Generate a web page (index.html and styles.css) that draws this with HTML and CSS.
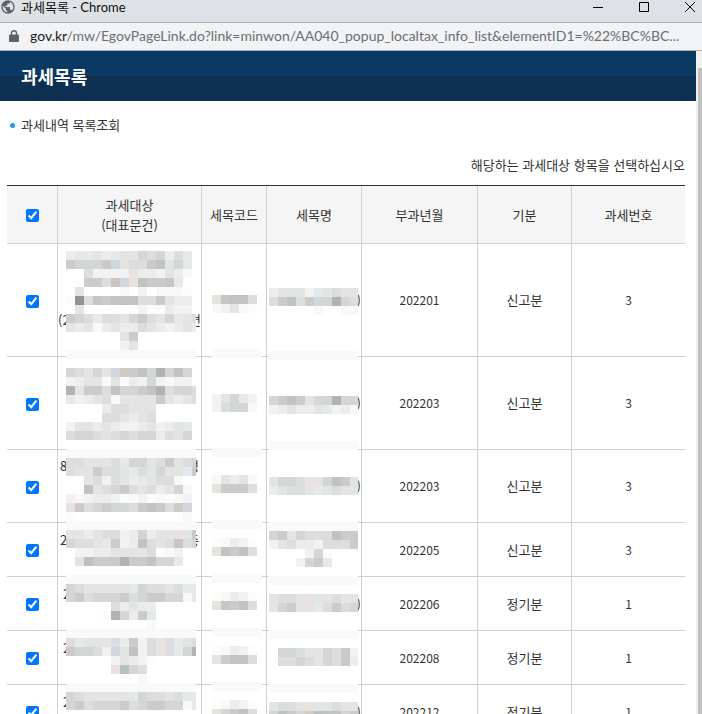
FILE: index.html
```html
<!DOCTYPE html>
<html lang="ko">
<head>
    <meta charset="UTF-8">
    <meta name="viewport" content="width=device-width, initial-scale=1.0">
    <title>과세목록</title>
    <link rel="stylesheet" href="styles.css">
</head>
<body>

    <div class="titlebar">
        <svg class="globe" width="16" height="16" viewBox="0 0 24 24">
            <path fill="#5f6368" d="M12 2C6.48 2 2 6.48 2 12s4.48 10 10 10 10-4.48 10-10S17.52 2 12 2zm-1 17.93c-3.95-.49-7-3.85-7-7.93 0-.62.08-1.21.21-1.79L9 15v1c0 1.1.9 2 2 2v1.93zm6.900-2.540c-.26-.81-1-1.390-1.900-1.390h-1v-3c0-.55-.45-1-1-1H8v-2h2c.55 0 1-.45 1-1V7h2c1.100 0 2-.9 2-2v-.410c2.930 1.190 5 4.060 5 7.410 0 2.080-.8 3.970-2.100 5.390z"/>
        </svg>
        <span class="window-title">과세목록 - Chrome</span>
        <div class="window-buttons">
            <button type="button" aria-label="최소화"><svg width="12" height="12" viewBox="0 0 12 12"><path d="M1 6.500h10"/></svg></button>
            <button type="button" aria-label="최대화"><svg width="12" height="12" viewBox="0 0 12 12"><path d="M1.500 1.500h9v9h-9z"/></svg></button>
            <button type="button" aria-label="닫기"><svg width="12" height="12" viewBox="0 0 12 12"><path d="M1 1l10 10M11 1L1 11"/></svg></button>
        </div>
    </div>

    <div class="addressbar">
        <svg width="10" height="12" viewBox="0 0 10 12">
            <path fill="#5f6368" d="M1 4.500h8a1 1 0 0 1 1 1V11a1 1 0 0 1-1 1H1a1 1 0 0 1-1-1V5.500a1 1 0 0 1 1-1z"/>
            <path fill="none" stroke="#5f6368" stroke-width="1.400" d="M2.500 5V3a2.500 2.300 0 0 1 5 0v2"/>
        </svg>
        <div class="url"><span>gov.kr</span>/mw/EgovPageLink.do?link=minwon/AA040_popup_localtax_info_list&amp;elementID1=%22%BC%BC...</div>
    </div>

    <div class="viewport">
        <main class="page">
            <header class="popup-header">
                <h1>과세목록</h1>
            </header>

            <div class="content">
                <h2>과세내역 목록조회</h2>
                <p class="guide">해당하는 과세대상 항목을 선택하십시오</p>

                <div class="table-wrap">
                    <table>
                        <colgroup>
                            <col class="col-check">
                            <col class="col-target">
                            <col class="col-code">
                            <col class="col-name">
                            <col class="col-month">
                            <col class="col-term">
                            <col>
                        </colgroup>
                        <thead>
                            <tr>
                                <th><input type="checkbox" aria-label="전체 선택" checked></th>
                                <th>과세대상<br>(대표문건)</th>
                                <th>세목코드</th>
                                <th>세목명</th>
                                <th>부과년월</th>
                                <th>기분</th>
                                <th>과세번호</th>
                            </tr>
                        </thead>
                        <tbody>
                            <tr>
                                <td><input type="checkbox" aria-label="202201 신고분 선택" checked></td>
                                <td class="target">
                                    <div class="line"></div>
                                    <div class="line"></div>
                                    <div class="line"></div>
                                    <div class="line wide"><span>(2</span><span>면</span></div>
                                    <div class="line"></div>
                                </td>
                                <td></td>
                                <td class="name">)</td>
                                <td class="num">202201</td>
                                <td>신고분</td>
                                <td class="num">3</td>
                            </tr>
                            <tr>
                                <td><input type="checkbox" aria-label="202203 신고분 선택" checked></td>
                                <td class="target">
                                    <div class="line"></div>
                                    <div class="line"></div>
                                    <div class="line"></div>
                                    <div class="line"></div>
                                </td>
                                <td></td>
                                <td class="name">)</td>
                                <td class="num">202203</td>
                                <td>신고분</td>
                                <td class="num">3</td>
                            </tr>
                            <tr>
                                <td><input type="checkbox" aria-label="202203 신고분 선택" checked></td>
                                <td class="target">
                                    <div class="line"><span>8</span><span>성</span></div>
                                    <div class="line"></div>
                                    <div class="line"></div>
                                </td>
                                <td></td>
                                <td class="name">)</td>
                                <td class="num">202203</td>
                                <td>신고분</td>
                                <td class="num">3</td>
                            </tr>
                            <tr>
                                <td><input type="checkbox" aria-label="202205 신고분 선택" checked></td>
                                <td class="target">
                                    <div class="line"><span>2</span><span>층</span></div>
                                    <div class="line"></div>
                                </td>
                                <td></td>
                                <td></td>
                                <td class="num">202205</td>
                                <td>신고분</td>
                                <td class="num">3</td>
                            </tr>
                            <tr>
                                <td><input type="checkbox" aria-label="202206 정기분 선택" checked></td>
                                <td class="target">
                                    <div class="line narrow"><span>2</span></div>
                                    <div class="line"></div>
                                </td>
                                <td></td>
                                <td class="name">)</td>
                                <td class="num">202206</td>
                                <td>정기분</td>
                                <td class="num">1</td>
                            </tr>
                            <tr>
                                <td><input type="checkbox" aria-label="202208 정기분 선택" checked></td>
                                <td class="target">
                                    <div class="line narrow"><span>2</span></div>
                                    <div class="line"></div>
                                </td>
                                <td></td>
                                <td></td>
                                <td class="num">202208</td>
                                <td>정기분</td>
                                <td class="num">1</td>
                            </tr>
                            <tr>
                                <td><input type="checkbox" aria-label="202212 정기분 선택" checked></td>
                                <td class="target">
                                    <div class="line narrow"><span>2</span></div>
                                    <div class="line"></div>
                                </td>
                                <td></td>
                                <td class="name">)</td>
                                <td class="num">202212</td>
                                <td>정기분</td>
                                <td class="num">1</td>
                            </tr>
                        </tbody>
                    </table>

                    <!-- mosaics over the private columns, filled in by mosaic.js -->
                    <svg class="mosaic mosaic-target" id="mosaic-target" width="130" height="480"></svg>
                    <svg class="mosaic mosaic-code" id="mosaic-code" width="50" height="440"></svg>
                    <svg class="mosaic mosaic-name" id="mosaic-name" width="89" height="440"></svg>
                </div>
            </div>
        </main>

        <div class="scrollbar">
            <div class="scroll-thumb"></div>
        </div>
    </div>

    <script src="mosaic.js"></script>
</body>
</html>
```
FILE: styles.css
```css
:root {
    --chrome-bg: #dee1e6;
    --address-bg: #f1f3f4;
    --chrome-line: #b0b1b3;
    --header-top: #0a3a63;
    --header-bottom: #0e3052;
    --text-color: #333333;
    --cell-line: #d0d0d0;
    --head-bg: #f5f5f5;
}

* {
    margin: 0;
    padding: 0;
    box-sizing: border-box;
}

body {
    height: 100vh;
    display: flex;
    flex-direction: column;
    overflow: hidden;
    background: #ffffff;
    color: var(--text-color);
    font-family: "Noto Sans CJK KR", sans-serif;
    font-size: 13px;
    line-height: 20px;
}

/* browser window */
.titlebar {
    flex: none;
    display: flex;
    align-items: center;
    height: 23px;
    padding-bottom: 8px;
    background: var(--chrome-bg);
    border-bottom: 1px solid var(--chrome-line);
}

.globe {
    flex: none;
    margin-right: 5px;
}

.window-title {
    color: #111111;
    font-family: Lato, "Noto Sans CJK KR", sans-serif;
    font-size: 13px;
    line-height: 14px;
}

.window-buttons {
    display: flex;
    gap: 34px;
    margin-left: auto;
    padding-right: 6px;
}

.window-buttons button {
    width: 12px;
    height: 12px;
    border: none;
    background: none;
}

.window-buttons svg {
    display: block;
    fill: none;
    stroke: #000000;
}

.addressbar {
    flex: none;
    display: flex;
    align-items: center;
    gap: 11px;
    height: 28px;
    padding: 0 10px 1px 9px;
    background: var(--address-bg);
    border-bottom: 1px solid var(--chrome-line);
}

.addressbar svg {
    flex: none;
}

.url {
    overflow: hidden;
    white-space: nowrap;
    color: #6b6f73;
    font-family: Lato, sans-serif;
    font-size: 14px;
}

.url span {
    color: #202124;
}

/* popup page */
.viewport {
    flex: 1;
    display: flex;
    min-height: 0;
}

.page {
    flex: 1;
    min-width: 0;
    overflow: hidden;
}

.popup-header {
    display: flex;
    align-items: center;
    height: 50px;
    padding-left: 21px;
    background: linear-gradient(var(--header-top) 50%, var(--header-bottom) 50%);
}

.popup-header h1 {
    color: #ffffff;
    font-size: 18px;
    font-weight: bold;
}

.content {
    padding: 14px 11px 0 7px;
}

.content h2 {
    display: flex;
    align-items: center;
    gap: 6px;
    padding-left: 3px;
    font-size: 13px;
    font-weight: normal;
}

.content h2::before {
    content: '';
    width: 5px;
    height: 5px;
    border-radius: 50%;
    background: #2196f3;
}

.guide {
    margin: 20px 0 10px;
    text-align: right;
}

.table-wrap {
    position: relative;
}

table {
    width: 100%;
    table-layout: fixed;
    border-collapse: separate;
    border-spacing: 0;
    border-top: 1px solid var(--text-color);
}

.col-check {
    width: 51px;
}

.col-target {
    width: 144px;
}

.col-code {
    width: 65px;
}

.col-name {
    width: 95px;
}

.col-month {
    width: 116px;
}

.col-term {
    width: 94px;
}

th,
td {
    height: 54px;
    border-right: 1px solid var(--cell-line);
    border-bottom: 1px solid var(--cell-line);
    font-weight: normal;
    text-align: center;
    vertical-align: middle;
}

th {
    height: 58px;
    background: var(--head-bg);
}

th:last-child,
td:last-child {
    border-right: none;
}

input[type="checkbox"] {
    width: 13px;
    height: 13px;
    vertical-align: middle;
}

.num {
    font-size: 12px;
}

.target {
    padding: 6px 0;
}

.line {
    display: flex;
    justify-content: space-between;
    height: 20px;
    padding: 0 2px;
}

.wide {
    padding: 0;
}

.narrow {
    padding: 0 5px;
}

.name {
    text-align: right;
}

.mosaic {
    position: absolute;
    shape-rendering: crispEdges;
}

.mosaic-target {
    top: 66px;
    left: 59px;
}

.mosaic-code {
    top: 110px;
    left: 205px;
}

.mosaic-name {
    top: 103px;
    left: 262px;
}

.scrollbar {
    flex: none;
    width: 6px;
    padding: 17px 0 0 2px;
    background: #f1f1f1;
}

.scroll-thumb {
    height: 100%;
    background: #c1c1c1;
}
```
FILE: mosaic.js
```js
const TILE = 9;

// one character per tile, anything missing here stays transparent
const colors = {
    0: '#939393', 1: '#fcfcfc', 2: '#f2f2f2', 3: '#ebecec', 4: '#e3e5e5',
    5: '#dcdddd', 6: '#d4d5d5', 7: '#cacbca', 8: '#c1c2c2', 9: '#b2b2b4',
    b: '#f8f8f8', c: '#e4e9eb', d: '#d2d7db', g: '#b8c0c0', l: '#dddce1',
    m: '#cac9ce', p: '#e8e2e1', q: '#cac5c1', y: '#e4e4de', z: '#cccbc5',
    s: '#f9f9f9'
};

const strip = 'sssssssssssssss';

const target = [
    '3cc43cy46l635c', '7666mdyl5m846c', '..52222p33243b', '..7m5qdp8mmqc',
    '.4....b.2.bbb1', '10lqm88855m433', '.4...1.1211322', '765c55467546c45',
    '434b34335432343', '......47', '......24', strip, '',
    '65p6pdz7869686', '2344b4132d2b22', '947758667895665', 'c2345b4444z4345',
    '....3l5p44', '....5l43pl', '2443432234234c', '5665y565663546', '', strip,
    '55p445c66457y56', '5p47554c5464yc7', '..4l2543c455b', '..8456m5p5346b',
    '2b23321b21b1b2', 'p756z6d578m5zd', '1............b', strip,
    '443455236344p47', '655pc7238545q56', '.2233444451b2', '.pg77m9z7866c', '', strip,
    '654444yc655p5cc', '67566675dzm66bc', '.....l3433', '....19637c', '.........b', strip,
    '5c44pl3725p5c45', '76652d482lp5c69', '.....24321', '.....pg65', '........b', strip,
    '654444yc655p5cc', '67566675dzm66bc'
];

const code = [
    'yq88l', 'b24b1', '', '', '', '', strip, '', '', '', '',
    '24dc2', '2566b', '', '', '', '', strip, '', '',
    'b434b', 'y777l', '', '', '', strip, '',
    '1b321', 'y878l', '', '', strip, '',
    '1b321', 'yq78l', '', '', strip, '',
    '1b321', 'y788l', '', '', strip, '',
    '1b321', 'y6m8l'
];

const name = [
    '34442c4544', '5785zd6965', '.....b..bb', '', '', '', '', strip, '', '', '', '',
    '6787yd6966', '23433yc23b', '', '', '', strip, '', '', '',
    '4665p46874', '34554c4544', '', '', '', strip,
    '67465l5877', '2453325557', '....261', '...267c', '', strip, '',
    '4554p44544', '4674pc5756', '', '', strip, '',
    '.6d54465m2', '.5565pd5m3', '', '', strip, '',
    '4554p44544', '6876zg8867'
];

function drawMosaic(id, rows) {
    const svg = document.getElementById(id);
    rows.forEach((row, y) => {
        [...row].forEach((key, x) => {
            if (!colors[key]) return;
            const rect = document.createElementNS('http://www.w3.org/2000/svg', 'rect');
            rect.setAttribute('x', x * TILE);
            rect.setAttribute('y', y * TILE);
            rect.setAttribute('width', TILE);
            rect.setAttribute('height', TILE);
            rect.setAttribute('fill', colors[key]);
            svg.appendChild(rect);
        });
    });
}

drawMosaic('mosaic-target', target);
drawMosaic('mosaic-code', code);
drawMosaic('mosaic-name', name);
```
